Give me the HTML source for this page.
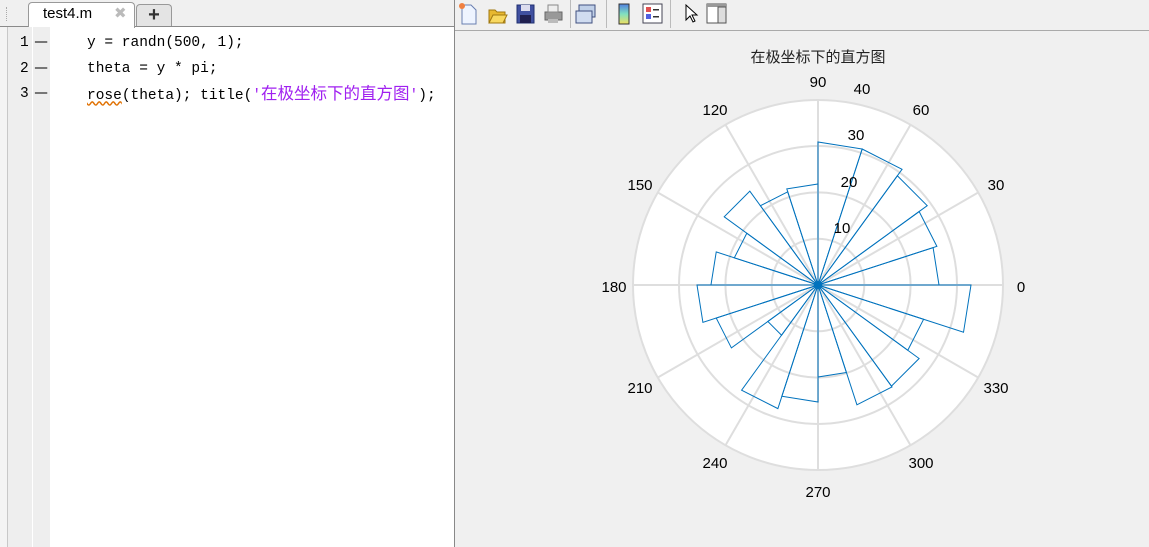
<!DOCTYPE html>
<html><head><meta charset="utf-8"><style>
body{margin:0;width:1149px;height:547px;overflow:hidden;background:#f0f0f0;position:relative;font-family:"Liberation Sans","Noto Sans CJK SC",sans-serif}
.abs{position:absolute}
.code{font-family:"Liberation Mono","Noto Sans CJK SC",monospace;font-size:14.5px;color:#000;white-space:pre}
</style></head><body>
<!-- editor -->
<div class="abs" style="left:0;top:0;width:455px;height:547px;background:#fff"></div>
<div class="abs" style="left:0;top:0;width:455px;height:26px;background:#f0f0f0;border-bottom:1px solid #8a8a8a"></div>
<div class="abs" style="left:6px;top:7px;width:3px;height:14px;border-left:1px dotted #aaa"></div>
<div class="abs" style="left:28px;top:2px;width:105px;height:25px;background:#fff;border:1px solid #999;border-bottom:none;border-radius:4px 4px 0 0"></div>
<div class="abs" style="left:43px;top:5px;font-size:15px">test4.m</div>
<div class="abs" style="left:114px;top:4px;font-size:15px;color:#bbb">✖</div>
<div class="abs" style="left:136px;top:4px;width:34px;height:21px;background:#e4e4e4;border:1px solid #999;border-bottom:none;border-radius:4px 4px 0 0;text-align:center;font-size:20px;line-height:20px;font-weight:bold;color:#333">+</div>
<div class="abs" style="left:0;top:27px;width:7px;height:520px;background:#f4f4f4;border-right:1px solid #c8c8c8"></div>
<div class="abs" style="left:8px;top:27px;width:24px;height:520px;background:#eee"></div>
<div class="abs" style="left:33px;top:27px;width:17px;height:520px;background:#eee"></div>
<div class="abs code" style="left:20px;top:31px;line-height:25.7px">1
2
3</div>
<div class="abs code" style="left:35px;top:31px;line-height:25.7px;transform:scaleX(1.4);transform-origin:0 0">—
—
—</div>
<div class="abs code" style="left:87px;top:31px;line-height:25.7px">y = randn(500, 1);
theta = y * pi;
<span style="text-decoration:underline wavy #e07000">rose</span>(theta); title(<span style="color:#a020f0">'<span style="font-size:16.5px">在极坐标下的直方图</span>'</span>);</div>
<div class="abs" style="left:454px;top:0;width:1px;height:547px;background:#888"></div>
<!-- toolbar -->
<div class="abs" style="left:455px;top:30px;width:694px;height:1px;background:#aaa"></div>
<svg class="abs" style="left:455px;top:0" width="300" height="30">
<path d="M7 5h9l5 5v14H7z" fill="#eef4ff" stroke="#6a7fb0"/><circle cx="7" cy="6" r="3" fill="#f08040"/>
<path d="M34 10h6l2 2h8v11H34z" fill="#e8b830" stroke="#a07810"/><path d="M34 23l4-8h14l-4 8z" fill="#f8d860" stroke="#a07810"/>
<rect x="62" y="5" width="17" height="18" fill="#4050a0" stroke="#203070"/><rect x="66" y="5" width="9" height="6" fill="#dde"/><rect x="65" y="15" width="11" height="8" fill="#202050"/>
<rect x="90" y="12" width="17" height="8" fill="#999" stroke="#666"/><rect x="93" y="5" width="10" height="7" fill="#eee" stroke="#888"/><rect x="93" y="19" width="10" height="4" fill="#bbb"/>
<rect x="115" y="0" width="1" height="28" fill="#bbb"/>
<rect x="124" y="5" width="16" height="12" fill="#c0d0e8" stroke="#405080"/><rect x="121" y="11" width="16" height="12" fill="#d0dcf0" stroke="#405080"/>
<rect x="151" y="0" width="1" height="28" fill="#bbb"/>
<defs><linearGradient id="g" x1="0" y1="0" x2="0" y2="1"><stop offset="0" stop-color="#5080e0"/><stop offset=".5" stop-color="#80e0c0"/><stop offset="1" stop-color="#f0e060"/></linearGradient></defs>
<rect x="164" y="4" width="10" height="20" fill="url(#g)" stroke="#333"/>
<rect x="188" y="4" width="19" height="19" fill="#fff" stroke="#445"/><rect x="191" y="7" width="5" height="5" fill="#e05050"/><rect x="191" y="14" width="5" height="5" fill="#5060e0"/><rect x="198" y="9" width="6" height="1.5" fill="#333"/><rect x="198" y="16" width="6" height="1.5" fill="#333"/>
<rect x="215" y="0" width="1" height="28" fill="#bbb"/>
<path d="M231 5v15l4-4 3 6 2-1-3-6h5z" fill="#fff" stroke="#000"/>
<rect x="252" y="4" width="19" height="19" fill="#fff" stroke="#555"/><rect x="252" y="4" width="19" height="3" fill="#999"/><rect x="263" y="7" width="8" height="16" fill="#ddd" stroke="#555"/>
</svg>
<!-- plot -->
<div class="abs" style="left:718px;top:46px;width:200px;text-align:center;font-size:15px;color:#222;font-family:'Noto Sans CJK SC',sans-serif">在极坐标下的直方图</div>
<svg class="abs" style="left:0;top:0" width="1149" height="547" font-family="Liberation Sans, sans-serif" font-size="15" fill="#000">
<g transform="translate(818,285)">
<circle r="185" fill="#fff" stroke="#dedede" stroke-width="2"/>
<g fill="none" stroke="#dedede" stroke-width="2">
<circle r="46.3"/><circle r="92.6"/><circle r="139"/>
<path d="M-185 0H185M0-185V185M160.2-92.5L-160.2 92.5M92.5-160.2L-92.5 160.2M-160.2-92.5L160.2 92.5M-92.5-160.2L92.5 160.2"/>
</g>
<g fill="none" stroke="#0072bd" stroke-width="1">
<polygon points="0,0 121,0 115.1,-37.4" />
<polygon points="0,0 125,0 118.9,-38.6" transform="rotate(-18)"/>
<polygon points="0,0 135,0 128.4,-41.7" transform="rotate(-36)"/>
<polygon points="0,0 143,0 136,-44.2" transform="rotate(-54)"/>
<polygon points="0,0 143,0 136,-44.2" transform="rotate(-72)"/>
<polygon points="0,0 101,0 96.1,-31.2" transform="rotate(-90)"/>
<polygon points="0,0 98,0 93.2,-30.3" transform="rotate(-108)"/>
<polygon points="0,0 116,0 110.3,-35.8" transform="rotate(-126)"/>
<polygon points="0,0 88,0 83.7,-27.2" transform="rotate(-144)"/>
<polygon points="0,0 107,0 101.8,-33.1" transform="rotate(-162)"/>
<polygon points="0,0 121,0 115.1,-37.4" transform="rotate(-180)"/>
<polygon points="0,0 107,0 101.8,-33.1" transform="rotate(-198)"/>
<polygon points="0,0 62,0 59,-19.2" transform="rotate(-216)"/>
<polygon points="0,0 130,0 123.6,-40.2" transform="rotate(-234)"/>
<polygon points="0,0 117,0 111.3,-36.2" transform="rotate(-252)"/>
<polygon points="0,0 92,0 87.5,-28.4" transform="rotate(-270)"/>
<polygon points="0,0 126,0 119.8,-38.9" transform="rotate(-288)"/>
<polygon points="0,0 125,0 118.9,-38.6" transform="rotate(-306)"/>
<polygon points="0,0 111,0 105.6,-34.3" transform="rotate(-324)"/>
<polygon points="0,0 153,0 145.5,-47.3" transform="rotate(-342)"/>
</g>
<circle r="4" fill="#0072bd"/>
</g>
<g text-anchor="middle">
<text x="818" y="87">90</text>
<text x="921" y="115">60</text>
<text x="996" y="190">30</text>
<text x="1021" y="292">0</text>
<text x="996" y="393">330</text>
<text x="921" y="468">300</text>
<text x="818" y="497">270</text>
<text x="715" y="468">240</text>
<text x="640" y="393">210</text>
<text x="614" y="292">180</text>
<text x="640" y="190">150</text>
<text x="715" y="115">120</text>
<text x="862" y="94">40</text>
<text x="856" y="140">30</text>
<text x="849" y="187">20</text>
<text x="842" y="233">10</text>
</g>
</svg>
</body></html>
